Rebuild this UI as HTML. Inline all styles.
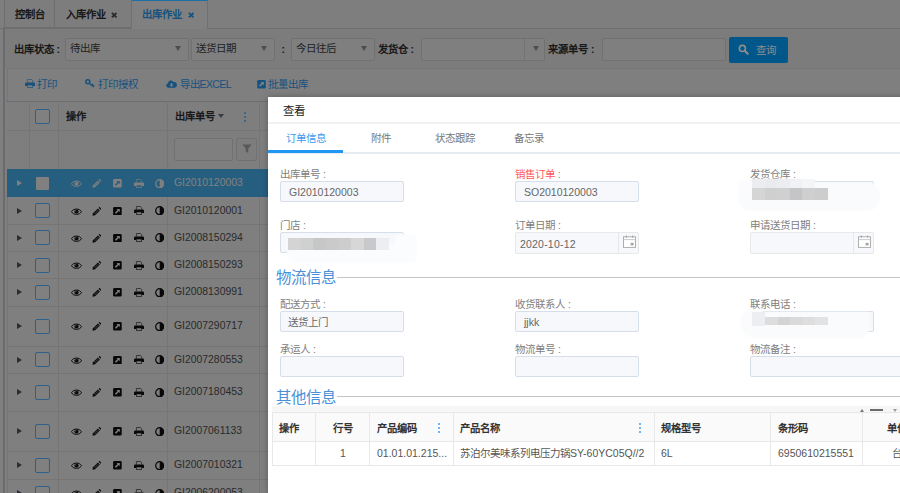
<!DOCTYPE html>
<html lang="zh-CN"><head><meta charset="utf-8">
<style>
*{box-sizing:border-box;margin:0;padding:0}
html,body{width:900px;height:493px;overflow:hidden;background:#fff;font-family:"Liberation Sans",sans-serif;font-size:10.5px;color:#333}
.abs{position:absolute}
#bg{position:absolute;left:0;top:0;width:900px;height:493px;background:#fff;overflow:hidden}
#dim{position:absolute;left:0;top:0;width:900px;height:493px;background:rgba(0,0,0,.5);z-index:1}
.tab{font-size:10.3px;position:absolute;top:0;height:28px;border:1px solid #ddd;border-top:none;background:#fafafa;line-height:30px;font-weight:bold;color:#333;padding-left:10px;white-space:nowrap}
.tab.act{z-index:2;background:#808080;border-color:#707070;color:#16527f;border-top:1.5px solid #1f6ea8;border-bottom:none;line-height:28px;height:29px}
.sel{position:absolute;height:23px;border:1px solid #e2e2e2;border-radius:2px;background:#fff;line-height:19.6px;padding-left:4px;color:#444;white-space:nowrap}
.sel i{position:absolute;right:6.5px;top:7px;border:3.4px solid transparent;border-top:5px solid #9a9a9a;border-bottom:none}
.lbl{font-size:10.3px;position:absolute;font-weight:bold;color:#333;line-height:14px;white-space:nowrap}
.tb{position:absolute;z-index:2;color:#16527f;white-space:nowrap;line-height:14px}
.hl{position:absolute;height:1px;background:#ebebeb}
.vl{position:absolute;width:1px;background:#ebebeb}
.cb{position:absolute;z-index:2;left:35.2px;width:15px;height:15px;border:1px solid #2c618c;border-radius:2px;background:#808080}
.num{position:absolute;left:174px;color:#555;white-space:nowrap;line-height:14px;font-size:10.4px}
.arr{position:absolute;left:17px;border:3.4px solid transparent;border-left:5.2px solid #555a66;border-right:none}
#modal{box-shadow:0 0 6px rgba(0,0,0,.28);z-index:3;position:absolute;left:268px;top:97px;width:640px;height:400px;background:#fff}
.fl{position:absolute;color:#808080;white-space:nowrap;line-height:14px}
.fi{position:absolute;width:124px;height:21px;border:1px solid #d5deea;border-radius:2px;background:#f6f8fb;line-height:20.5px;padding-left:8px;color:#666;white-space:nowrap}
.fd{border-color:#e8e8e8;padding-left:4px;line-height:22px;letter-spacing:0.2px;height:22px}
.fd b{position:absolute;right:19px;top:0;width:1px;height:20px;background:#e8e8e8}
.sec{position:absolute;left:8px;color:#4a90d9;font-size:15.4px;line-height:20px;white-space:nowrap;background:#fff;padding-right:1px}
.gh{font-size:10.3px;position:absolute;font-weight:bold;color:#333;white-space:nowrap;line-height:14px}
.gd{position:absolute;color:#555;white-space:nowrap;line-height:14px}
.mz{position:absolute;}
.dots{z-index:2;position:absolute;width:2px;height:2px;border-radius:1px;background:#4a9be0;box-shadow:0 4px 0 #4a9be0,0 8px 0 #4a9be0}
</style></head><body>
<div id="bg">
  <div class="abs" style="left:0;top:0;width:900px;height:28px;background:#fdfdfd"></div>
  <div class="abs" style="left:4px;top:28px;width:896px;height:40px;background:#f8f8f8"></div><div class="hl" style="left:0;top:27.5px;width:900px;background:#ddd"></div>
  <div class="tab" style="left:3.5px;width:51.5px">控制台</div>
  <div class="tab" style="left:54px;width:77.5px;padding-left:11px">入库作业<svg style="margin-left:5px;vertical-align:-0.5px" width="6.4" height="6.4" viewBox="0 0 7 7"><path d="M1 1 L6 6 M6 1 L1 6" stroke="#555" stroke-width="2" fill="none"/></svg></div>
  <div class="tab act" style="left:131px;width:77px;padding-left:9.5px">出库作业<svg style="margin-left:6.5px;vertical-align:-0.5px" width="6.4" height="6.4" viewBox="0 0 7 7"><path d="M1 1 L6 6 M6 1 L1 6" stroke="#16527f" stroke-width="2" fill="none"/></svg></div>
  <div class="vl" style="left:3px;top:28px;height:470px;width:1.5px;background:#d2d6de"></div>
  <div class="lbl" style="left:13.5px;top:43px">出库状态<span style="margin-left:3px">:</span></div>
  <div class="sel" style="left:64.5px;top:38px;width:124px">待出库<i></i></div>
  <div class="sel" style="left:190.5px;top:38px;width:84px">送货日期<i></i></div>
  <div class="lbl" style="left:281px;top:43px"><span style="margin-left:0.5px">:</span></div>
  <div class="sel" style="left:290.5px;top:38px;width:84px">今日往后<i></i></div>
  <div class="lbl" style="left:377.5px;top:43px">发货仓<span style="margin-left:3px">:</span></div>
  <div class="sel" style="left:421px;top:38px;width:124px"><i style="right:5.5px"></i><b style="position:absolute;right:19px;top:0;width:1px;height:21px;background:#e4e4e4"></b></div>
  <div class="lbl" style="left:548px;top:43px">来源单号<span style="margin-left:3px">:</span></div>
  <div class="sel" style="left:602px;top:38px;width:124px"></div>
  <div class="abs" style="left:729px;top:36.5px;width:59px;height:26px;z-index:2;background:#02578a;border-radius:2px;color:#8e8e8e;line-height:26px;padding-left:27px">查询</div>
  <svg class="abs" style="z-index:2;left:738px;top:44px" width="11" height="11" viewBox="0 0 12 12"><circle cx="4.8" cy="4.8" r="3.3" fill="none" stroke="#8e8e8e" stroke-width="1.7"/><path d="M7.4 7.4 L10.6 10.6" stroke="#8e8e8e" stroke-width="2.2" stroke-linecap="round"/></svg>
  <div class="hl" style="left:6px;top:67.5px;width:894px"></div>
  <div class="vl" style="left:6.5px;top:68px;height:430px"></div>
  <!-- toolbar icons -->
  <svg class="abs" style="z-index:2;left:24.5px;top:79px" width="10" height="9" viewBox="0 0 10 9"><path d="M2.4 3.6 V0.5 H6.6 L7.6 1.5 V3.6" fill="none" stroke="#16527f" stroke-width="0.8" opacity="0.8"/><path d="M0 4.5 Q0 3.4 1.1 3.4 H8.9 Q10 3.4 10 4.5 V7.1 H7.9 V6 H2.1 V7.1 H0 Z" fill="#16527f"/><rect x="2.4" y="6" width="5.2" height="2.5" fill="none" stroke="#16527f" stroke-width="0.8" opacity="0.85"/></svg>
  <div class="tb" style="left:37px;top:76.5px">打印</div>
  <svg class="abs" style="z-index:2;left:84.5px;top:79px" width="10" height="9" viewBox="0 0 10 9"><circle cx="2.8" cy="2.8" r="2" fill="none" stroke="#16527f" stroke-width="1.5"/><path d="M4.3 4.2 L8.6 8 M6.6 6.2 L8 4.9 M8 7.4 L9.3 6.2" stroke="#16527f" stroke-width="1.4" fill="none"/></svg>
  <div class="tb" style="left:98px;top:76.5px">打印授权</div>
  <svg class="abs" style="z-index:2;left:165.5px;top:80px" width="11" height="8" viewBox="0 0 11 8"><path d="M2.6 7.8 A2.3 2.3 0 0 1 1.9 3.3 A3 3 0 0 1 7.6 2.2 A2.8 2.8 0 0 1 8.6 7.8 Z" fill="#16527f"/><path d="M4.8 3 H6.2 V4.8 H7.4 L5.5 6.9 L3.6 4.8 H4.8 Z" fill="#808080"/></svg>
  <div class="tb" style="left:179.5px;top:76.5px">导出<span style="letter-spacing:-0.6px">EXCEL</span></div>
  <svg class="abs" style="z-index:2;left:256.5px;top:80px" width="9" height="8.5" viewBox="0 0 9 9"><rect x="0" y="0" width="9" height="9" rx="1.3" fill="#16527f"/><path d="M3.4 2 H7 V5.6 L5.8 4.4 L3 7.2 L1.8 6 L4.6 3.2 Z" fill="#808080"/></svg>
  <div class="tb" style="left:268px;top:76.5px">批量出库</div>
  
  <!-- grid header -->
  <div class="abs" style="left:7px;top:101px;width:893px;height:68px;background:#fdfdfd"></div>
  <div class="hl" style="left:7px;top:130px;width:893px"></div><div class="hl" style="left:6px;top:101px;width:894px;background:#d4dce6"></div>
  <div class="vl" style="left:29px;top:101px;height:68px"></div>
  <div class="vl" style="left:58px;top:101px;height:400px"></div>
  <div class="vl" style="left:167px;top:101px;height:400px"></div>
  <div class="vl" style="left:259px;top:101px;height:400px"></div>
  <div class="cb" style="top:109px"></div>
  <div class="lbl" style="left:66px;top:109.5px">操作</div>
  <div class="lbl" style="left:174.5px;top:109.5px">出库单号</div>
  <i class="abs" style="left:218px;top:114px;border:3px solid transparent;border-top:4.5px solid #777;border-bottom:none"></i>
  <div class="dots" style="left:244px;top:111.5px;background:#2c618c;box-shadow:0 4px 0 #2c618c,0 8px 0 #2c618c"></div>
  <div class="sel" style="left:174px;top:138px;width:59px"></div>
  <div class="sel" style="left:235.5px;top:138px;width:21px;background:#fafafa"><svg class="abs" style="left:5px;top:5px" width="10" height="10" viewBox="0 0 10 10"><path d="M0.3 0.5 H9.7 L6.2 4.6 V9 L3.8 7.6 V4.6 Z" fill="#b0b0b0"/></svg></div>
  <div class="abs" style="left:7px;top:169px;width:893px;height:28px;background:#4cbcff"></div><div class="arr" style="top:180.1px;border-left-color:#fff"></div><div class="cb" style="top:175.5px;background:#808080;border-color:#265e80"></div><svg class="abs" style="left:70.5px;top:180.0px" width="11" height="7.4" viewBox="0 0 11 7.4"><path d="M0.5 3.7 C2.2 0.2 8.8 0.2 10.5 3.7 C8.8 7.2 2.2 7.2 0.5 3.7 Z" fill="none" stroke="#fff" stroke-width="1"/><circle cx="5.5" cy="3.5" r="2.1" fill="#fff"/><circle cx="4.7" cy="2.7" r="0.7" fill="#4cbcff" opacity="0.6"/></svg><svg class="abs" style="left:92px;top:179.10000000000002px" width="9.4" height="9.2" viewBox="0 0 10 10"><path d="M0.4 9.6 L1 6.8 L6.3 1.5 L8.5 3.7 L3.2 9 Z" fill="#fff"/><path d="M7.1 0.8 L7.8 0.1 Q8.1 -0.1 8.5 0.2 L9.8 1.5 Q10.1 1.9 9.9 2.2 L9.2 2.9 Z" fill="#fff"/><path d="M2 7 L6.4 2.6 L7.4 3.6 L3 8 Z" fill="#4cbcff" opacity="0.35"/></svg><svg class="abs" style="left:113.4px;top:179.0px" width="8.8" height="8.6" viewBox="0 0 9 9"><rect x="0" y="0" width="9" height="9" rx="1.3" fill="#fff"/><path d="M3.6 2 H7 V5.4 L5.9 4.3 L3.1 7.1 L1.9 5.9 L4.7 3.1 Z" fill="#4cbcff"/></svg><svg class="abs" style="left:133.6px;top:178.70000000000002px" width="10" height="9" viewBox="0 0 10 9"><path d="M2.4 3.6 V0.5 H6.6 L7.6 1.5 V3.6" fill="none" stroke="#fff" stroke-width="0.8" opacity="0.75"/><path d="M0 4.5 Q0 3.4 1.1 3.4 H8.9 Q10 3.4 10 4.5 V7.1 H7.9 V6 H2.1 V7.1 H0 Z" fill="#fff"/><rect x="2.4" y="6" width="5.2" height="2.5" fill="none" stroke="#fff" stroke-width="0.8" opacity="0.8"/></svg><svg class="abs" style="left:154.8px;top:178.60000000000002px" width="9.4" height="9.4" viewBox="0 0 9 9"><circle cx="4.5" cy="4.5" r="3.8" fill="none" stroke="#fff" stroke-width="1.2"/><path d="M4.5 0.7 A3.8 3.8 0 0 1 4.5 8.3 Z" fill="#fff"/></svg><div class="num" style="top:176.0px;color:#fff">GI2010120003</div><div class="hl" style="left:7px;top:223.5px;width:893px"></div><div class="arr" style="top:207.6px"></div><div class="cb" style="top:203.0px"></div><svg class="abs" style="left:70.5px;top:207.5px" width="11" height="7.4" viewBox="0 0 11 7.4"><path d="M0.5 3.7 C2.2 0.2 8.8 0.2 10.5 3.7 C8.8 7.2 2.2 7.2 0.5 3.7 Z" fill="none" stroke="#111" stroke-width="1"/><circle cx="5.5" cy="3.5" r="2.1" fill="#111"/><circle cx="4.7" cy="2.7" r="0.7" fill="#fff" opacity="0.6"/></svg><svg class="abs" style="left:92px;top:206.60000000000002px" width="9.4" height="9.2" viewBox="0 0 10 10"><path d="M0.4 9.6 L1 6.8 L6.3 1.5 L8.5 3.7 L3.2 9 Z" fill="#111"/><path d="M7.1 0.8 L7.8 0.1 Q8.1 -0.1 8.5 0.2 L9.8 1.5 Q10.1 1.9 9.9 2.2 L9.2 2.9 Z" fill="#111"/><path d="M2 7 L6.4 2.6 L7.4 3.6 L3 8 Z" fill="#fff" opacity="0.35"/></svg><svg class="abs" style="left:113.4px;top:206.5px" width="8.8" height="8.6" viewBox="0 0 9 9"><rect x="0" y="0" width="9" height="9" rx="1.3" fill="#111"/><path d="M3.6 2 H7 V5.4 L5.9 4.3 L3.1 7.1 L1.9 5.9 L4.7 3.1 Z" fill="#fff"/></svg><svg class="abs" style="left:133.6px;top:206.20000000000002px" width="10" height="9" viewBox="0 0 10 9"><path d="M2.4 3.6 V0.5 H6.6 L7.6 1.5 V3.6" fill="none" stroke="#111" stroke-width="0.8" opacity="0.75"/><path d="M0 4.5 Q0 3.4 1.1 3.4 H8.9 Q10 3.4 10 4.5 V7.1 H7.9 V6 H2.1 V7.1 H0 Z" fill="#111"/><rect x="2.4" y="6" width="5.2" height="2.5" fill="none" stroke="#111" stroke-width="0.8" opacity="0.8"/></svg><svg class="abs" style="left:154.8px;top:206.10000000000002px" width="9.4" height="9.4" viewBox="0 0 9 9"><circle cx="4.5" cy="4.5" r="3.8" fill="none" stroke="#111" stroke-width="1.2"/><path d="M4.5 0.7 A3.8 3.8 0 0 1 4.5 8.3 Z" fill="#111"/></svg><div class="num" style="top:203.5px">GI2010120001</div><div class="hl" style="left:7px;top:251.0px;width:893px"></div><div class="arr" style="top:234.85px"></div><div class="cb" style="top:230.25px"></div><svg class="abs" style="left:70.5px;top:234.75px" width="11" height="7.4" viewBox="0 0 11 7.4"><path d="M0.5 3.7 C2.2 0.2 8.8 0.2 10.5 3.7 C8.8 7.2 2.2 7.2 0.5 3.7 Z" fill="none" stroke="#111" stroke-width="1"/><circle cx="5.5" cy="3.5" r="2.1" fill="#111"/><circle cx="4.7" cy="2.7" r="0.7" fill="#fff" opacity="0.6"/></svg><svg class="abs" style="left:92px;top:233.85000000000002px" width="9.4" height="9.2" viewBox="0 0 10 10"><path d="M0.4 9.6 L1 6.8 L6.3 1.5 L8.5 3.7 L3.2 9 Z" fill="#111"/><path d="M7.1 0.8 L7.8 0.1 Q8.1 -0.1 8.5 0.2 L9.8 1.5 Q10.1 1.9 9.9 2.2 L9.2 2.9 Z" fill="#111"/><path d="M2 7 L6.4 2.6 L7.4 3.6 L3 8 Z" fill="#fff" opacity="0.35"/></svg><svg class="abs" style="left:113.4px;top:233.75px" width="8.8" height="8.6" viewBox="0 0 9 9"><rect x="0" y="0" width="9" height="9" rx="1.3" fill="#111"/><path d="M3.6 2 H7 V5.4 L5.9 4.3 L3.1 7.1 L1.9 5.9 L4.7 3.1 Z" fill="#fff"/></svg><svg class="abs" style="left:133.6px;top:233.45000000000002px" width="10" height="9" viewBox="0 0 10 9"><path d="M2.4 3.6 V0.5 H6.6 L7.6 1.5 V3.6" fill="none" stroke="#111" stroke-width="0.8" opacity="0.75"/><path d="M0 4.5 Q0 3.4 1.1 3.4 H8.9 Q10 3.4 10 4.5 V7.1 H7.9 V6 H2.1 V7.1 H0 Z" fill="#111"/><rect x="2.4" y="6" width="5.2" height="2.5" fill="none" stroke="#111" stroke-width="0.8" opacity="0.8"/></svg><svg class="abs" style="left:154.8px;top:233.35000000000002px" width="9.4" height="9.4" viewBox="0 0 9 9"><circle cx="4.5" cy="4.5" r="3.8" fill="none" stroke="#111" stroke-width="1.2"/><path d="M4.5 0.7 A3.8 3.8 0 0 1 4.5 8.3 Z" fill="#111"/></svg><div class="num" style="top:230.75px">GI2008150294</div><div class="hl" style="left:7px;top:278.0px;width:893px"></div><div class="arr" style="top:262.1px"></div><div class="cb" style="top:257.5px"></div><svg class="abs" style="left:70.5px;top:262.0px" width="11" height="7.4" viewBox="0 0 11 7.4"><path d="M0.5 3.7 C2.2 0.2 8.8 0.2 10.5 3.7 C8.8 7.2 2.2 7.2 0.5 3.7 Z" fill="none" stroke="#111" stroke-width="1"/><circle cx="5.5" cy="3.5" r="2.1" fill="#111"/><circle cx="4.7" cy="2.7" r="0.7" fill="#fff" opacity="0.6"/></svg><svg class="abs" style="left:92px;top:261.1px" width="9.4" height="9.2" viewBox="0 0 10 10"><path d="M0.4 9.6 L1 6.8 L6.3 1.5 L8.5 3.7 L3.2 9 Z" fill="#111"/><path d="M7.1 0.8 L7.8 0.1 Q8.1 -0.1 8.5 0.2 L9.8 1.5 Q10.1 1.9 9.9 2.2 L9.2 2.9 Z" fill="#111"/><path d="M2 7 L6.4 2.6 L7.4 3.6 L3 8 Z" fill="#fff" opacity="0.35"/></svg><svg class="abs" style="left:113.4px;top:261.0px" width="8.8" height="8.6" viewBox="0 0 9 9"><rect x="0" y="0" width="9" height="9" rx="1.3" fill="#111"/><path d="M3.6 2 H7 V5.4 L5.9 4.3 L3.1 7.1 L1.9 5.9 L4.7 3.1 Z" fill="#fff"/></svg><svg class="abs" style="left:133.6px;top:260.7px" width="10" height="9" viewBox="0 0 10 9"><path d="M2.4 3.6 V0.5 H6.6 L7.6 1.5 V3.6" fill="none" stroke="#111" stroke-width="0.8" opacity="0.75"/><path d="M0 4.5 Q0 3.4 1.1 3.4 H8.9 Q10 3.4 10 4.5 V7.1 H7.9 V6 H2.1 V7.1 H0 Z" fill="#111"/><rect x="2.4" y="6" width="5.2" height="2.5" fill="none" stroke="#111" stroke-width="0.8" opacity="0.8"/></svg><svg class="abs" style="left:154.8px;top:260.6px" width="9.4" height="9.4" viewBox="0 0 9 9"><circle cx="4.5" cy="4.5" r="3.8" fill="none" stroke="#111" stroke-width="1.2"/><path d="M4.5 0.7 A3.8 3.8 0 0 1 4.5 8.3 Z" fill="#111"/></svg><div class="num" style="top:258.0px">GI2008150293</div><div class="hl" style="left:7px;top:305.5px;width:893px"></div><div class="arr" style="top:289.35px"></div><div class="cb" style="top:284.75px"></div><svg class="abs" style="left:70.5px;top:289.25px" width="11" height="7.4" viewBox="0 0 11 7.4"><path d="M0.5 3.7 C2.2 0.2 8.8 0.2 10.5 3.7 C8.8 7.2 2.2 7.2 0.5 3.7 Z" fill="none" stroke="#111" stroke-width="1"/><circle cx="5.5" cy="3.5" r="2.1" fill="#111"/><circle cx="4.7" cy="2.7" r="0.7" fill="#fff" opacity="0.6"/></svg><svg class="abs" style="left:92px;top:288.35px" width="9.4" height="9.2" viewBox="0 0 10 10"><path d="M0.4 9.6 L1 6.8 L6.3 1.5 L8.5 3.7 L3.2 9 Z" fill="#111"/><path d="M7.1 0.8 L7.8 0.1 Q8.1 -0.1 8.5 0.2 L9.8 1.5 Q10.1 1.9 9.9 2.2 L9.2 2.9 Z" fill="#111"/><path d="M2 7 L6.4 2.6 L7.4 3.6 L3 8 Z" fill="#fff" opacity="0.35"/></svg><svg class="abs" style="left:113.4px;top:288.25px" width="8.8" height="8.6" viewBox="0 0 9 9"><rect x="0" y="0" width="9" height="9" rx="1.3" fill="#111"/><path d="M3.6 2 H7 V5.4 L5.9 4.3 L3.1 7.1 L1.9 5.9 L4.7 3.1 Z" fill="#fff"/></svg><svg class="abs" style="left:133.6px;top:287.95px" width="10" height="9" viewBox="0 0 10 9"><path d="M2.4 3.6 V0.5 H6.6 L7.6 1.5 V3.6" fill="none" stroke="#111" stroke-width="0.8" opacity="0.75"/><path d="M0 4.5 Q0 3.4 1.1 3.4 H8.9 Q10 3.4 10 4.5 V7.1 H7.9 V6 H2.1 V7.1 H0 Z" fill="#111"/><rect x="2.4" y="6" width="5.2" height="2.5" fill="none" stroke="#111" stroke-width="0.8" opacity="0.8"/></svg><svg class="abs" style="left:154.8px;top:287.85px" width="9.4" height="9.4" viewBox="0 0 9 9"><circle cx="4.5" cy="4.5" r="3.8" fill="none" stroke="#111" stroke-width="1.2"/><path d="M4.5 0.7 A3.8 3.8 0 0 1 4.5 8.3 Z" fill="#111"/></svg><div class="num" style="top:285.25px">GI2008130991</div><div class="hl" style="left:7px;top:345.5px;width:893px"></div><div class="arr" style="top:323.1px"></div><div class="cb" style="top:318.5px"></div><svg class="abs" style="left:70.5px;top:323.0px" width="11" height="7.4" viewBox="0 0 11 7.4"><path d="M0.5 3.7 C2.2 0.2 8.8 0.2 10.5 3.7 C8.8 7.2 2.2 7.2 0.5 3.7 Z" fill="none" stroke="#111" stroke-width="1"/><circle cx="5.5" cy="3.5" r="2.1" fill="#111"/><circle cx="4.7" cy="2.7" r="0.7" fill="#fff" opacity="0.6"/></svg><svg class="abs" style="left:92px;top:322.1px" width="9.4" height="9.2" viewBox="0 0 10 10"><path d="M0.4 9.6 L1 6.8 L6.3 1.5 L8.5 3.7 L3.2 9 Z" fill="#111"/><path d="M7.1 0.8 L7.8 0.1 Q8.1 -0.1 8.5 0.2 L9.8 1.5 Q10.1 1.9 9.9 2.2 L9.2 2.9 Z" fill="#111"/><path d="M2 7 L6.4 2.6 L7.4 3.6 L3 8 Z" fill="#fff" opacity="0.35"/></svg><svg class="abs" style="left:113.4px;top:322.0px" width="8.8" height="8.6" viewBox="0 0 9 9"><rect x="0" y="0" width="9" height="9" rx="1.3" fill="#111"/><path d="M3.6 2 H7 V5.4 L5.9 4.3 L3.1 7.1 L1.9 5.9 L4.7 3.1 Z" fill="#fff"/></svg><svg class="abs" style="left:133.6px;top:321.7px" width="10" height="9" viewBox="0 0 10 9"><path d="M2.4 3.6 V0.5 H6.6 L7.6 1.5 V3.6" fill="none" stroke="#111" stroke-width="0.8" opacity="0.75"/><path d="M0 4.5 Q0 3.4 1.1 3.4 H8.9 Q10 3.4 10 4.5 V7.1 H7.9 V6 H2.1 V7.1 H0 Z" fill="#111"/><rect x="2.4" y="6" width="5.2" height="2.5" fill="none" stroke="#111" stroke-width="0.8" opacity="0.8"/></svg><svg class="abs" style="left:154.8px;top:321.6px" width="9.4" height="9.4" viewBox="0 0 9 9"><circle cx="4.5" cy="4.5" r="3.8" fill="none" stroke="#111" stroke-width="1.2"/><path d="M4.5 0.7 A3.8 3.8 0 0 1 4.5 8.3 Z" fill="#111"/></svg><div class="num" style="top:319.0px">GI2007290717</div><div class="hl" style="left:7px;top:372.5px;width:893px"></div><div class="arr" style="top:356.6px"></div><div class="cb" style="top:352.0px"></div><svg class="abs" style="left:70.5px;top:356.5px" width="11" height="7.4" viewBox="0 0 11 7.4"><path d="M0.5 3.7 C2.2 0.2 8.8 0.2 10.5 3.7 C8.8 7.2 2.2 7.2 0.5 3.7 Z" fill="none" stroke="#111" stroke-width="1"/><circle cx="5.5" cy="3.5" r="2.1" fill="#111"/><circle cx="4.7" cy="2.7" r="0.7" fill="#fff" opacity="0.6"/></svg><svg class="abs" style="left:92px;top:355.6px" width="9.4" height="9.2" viewBox="0 0 10 10"><path d="M0.4 9.6 L1 6.8 L6.3 1.5 L8.5 3.7 L3.2 9 Z" fill="#111"/><path d="M7.1 0.8 L7.8 0.1 Q8.1 -0.1 8.5 0.2 L9.8 1.5 Q10.1 1.9 9.9 2.2 L9.2 2.9 Z" fill="#111"/><path d="M2 7 L6.4 2.6 L7.4 3.6 L3 8 Z" fill="#fff" opacity="0.35"/></svg><svg class="abs" style="left:113.4px;top:355.5px" width="8.8" height="8.6" viewBox="0 0 9 9"><rect x="0" y="0" width="9" height="9" rx="1.3" fill="#111"/><path d="M3.6 2 H7 V5.4 L5.9 4.3 L3.1 7.1 L1.9 5.9 L4.7 3.1 Z" fill="#fff"/></svg><svg class="abs" style="left:133.6px;top:355.2px" width="10" height="9" viewBox="0 0 10 9"><path d="M2.4 3.6 V0.5 H6.6 L7.6 1.5 V3.6" fill="none" stroke="#111" stroke-width="0.8" opacity="0.75"/><path d="M0 4.5 Q0 3.4 1.1 3.4 H8.9 Q10 3.4 10 4.5 V7.1 H7.9 V6 H2.1 V7.1 H0 Z" fill="#111"/><rect x="2.4" y="6" width="5.2" height="2.5" fill="none" stroke="#111" stroke-width="0.8" opacity="0.8"/></svg><svg class="abs" style="left:154.8px;top:355.1px" width="9.4" height="9.4" viewBox="0 0 9 9"><circle cx="4.5" cy="4.5" r="3.8" fill="none" stroke="#111" stroke-width="1.2"/><path d="M4.5 0.7 A3.8 3.8 0 0 1 4.5 8.3 Z" fill="#111"/></svg><div class="num" style="top:352.5px">GI2007280553</div><div class="hl" style="left:7px;top:411.0px;width:893px"></div><div class="arr" style="top:389.35px"></div><div class="cb" style="top:384.75px"></div><svg class="abs" style="left:70.5px;top:389.25px" width="11" height="7.4" viewBox="0 0 11 7.4"><path d="M0.5 3.7 C2.2 0.2 8.8 0.2 10.5 3.7 C8.8 7.2 2.2 7.2 0.5 3.7 Z" fill="none" stroke="#111" stroke-width="1"/><circle cx="5.5" cy="3.5" r="2.1" fill="#111"/><circle cx="4.7" cy="2.7" r="0.7" fill="#fff" opacity="0.6"/></svg><svg class="abs" style="left:92px;top:388.35px" width="9.4" height="9.2" viewBox="0 0 10 10"><path d="M0.4 9.6 L1 6.8 L6.3 1.5 L8.5 3.7 L3.2 9 Z" fill="#111"/><path d="M7.1 0.8 L7.8 0.1 Q8.1 -0.1 8.5 0.2 L9.8 1.5 Q10.1 1.9 9.9 2.2 L9.2 2.9 Z" fill="#111"/><path d="M2 7 L6.4 2.6 L7.4 3.6 L3 8 Z" fill="#fff" opacity="0.35"/></svg><svg class="abs" style="left:113.4px;top:388.25px" width="8.8" height="8.6" viewBox="0 0 9 9"><rect x="0" y="0" width="9" height="9" rx="1.3" fill="#111"/><path d="M3.6 2 H7 V5.4 L5.9 4.3 L3.1 7.1 L1.9 5.9 L4.7 3.1 Z" fill="#fff"/></svg><svg class="abs" style="left:133.6px;top:387.95px" width="10" height="9" viewBox="0 0 10 9"><path d="M2.4 3.6 V0.5 H6.6 L7.6 1.5 V3.6" fill="none" stroke="#111" stroke-width="0.8" opacity="0.75"/><path d="M0 4.5 Q0 3.4 1.1 3.4 H8.9 Q10 3.4 10 4.5 V7.1 H7.9 V6 H2.1 V7.1 H0 Z" fill="#111"/><rect x="2.4" y="6" width="5.2" height="2.5" fill="none" stroke="#111" stroke-width="0.8" opacity="0.8"/></svg><svg class="abs" style="left:154.8px;top:387.85px" width="9.4" height="9.4" viewBox="0 0 9 9"><circle cx="4.5" cy="4.5" r="3.8" fill="none" stroke="#111" stroke-width="1.2"/><path d="M4.5 0.7 A3.8 3.8 0 0 1 4.5 8.3 Z" fill="#111"/></svg><div class="num" style="top:385.25px">GI2007180453</div><div class="hl" style="left:7px;top:450.5px;width:893px"></div><div class="arr" style="top:428.35px"></div><div class="cb" style="top:423.75px"></div><svg class="abs" style="left:70.5px;top:428.25px" width="11" height="7.4" viewBox="0 0 11 7.4"><path d="M0.5 3.7 C2.2 0.2 8.8 0.2 10.5 3.7 C8.8 7.2 2.2 7.2 0.5 3.7 Z" fill="none" stroke="#111" stroke-width="1"/><circle cx="5.5" cy="3.5" r="2.1" fill="#111"/><circle cx="4.7" cy="2.7" r="0.7" fill="#fff" opacity="0.6"/></svg><svg class="abs" style="left:92px;top:427.35px" width="9.4" height="9.2" viewBox="0 0 10 10"><path d="M0.4 9.6 L1 6.8 L6.3 1.5 L8.5 3.7 L3.2 9 Z" fill="#111"/><path d="M7.1 0.8 L7.8 0.1 Q8.1 -0.1 8.5 0.2 L9.8 1.5 Q10.1 1.9 9.9 2.2 L9.2 2.9 Z" fill="#111"/><path d="M2 7 L6.4 2.6 L7.4 3.6 L3 8 Z" fill="#fff" opacity="0.35"/></svg><svg class="abs" style="left:113.4px;top:427.25px" width="8.8" height="8.6" viewBox="0 0 9 9"><rect x="0" y="0" width="9" height="9" rx="1.3" fill="#111"/><path d="M3.6 2 H7 V5.4 L5.9 4.3 L3.1 7.1 L1.9 5.9 L4.7 3.1 Z" fill="#fff"/></svg><svg class="abs" style="left:133.6px;top:426.95px" width="10" height="9" viewBox="0 0 10 9"><path d="M2.4 3.6 V0.5 H6.6 L7.6 1.5 V3.6" fill="none" stroke="#111" stroke-width="0.8" opacity="0.75"/><path d="M0 4.5 Q0 3.4 1.1 3.4 H8.9 Q10 3.4 10 4.5 V7.1 H7.9 V6 H2.1 V7.1 H0 Z" fill="#111"/><rect x="2.4" y="6" width="5.2" height="2.5" fill="none" stroke="#111" stroke-width="0.8" opacity="0.8"/></svg><svg class="abs" style="left:154.8px;top:426.85px" width="9.4" height="9.4" viewBox="0 0 9 9"><circle cx="4.5" cy="4.5" r="3.8" fill="none" stroke="#111" stroke-width="1.2"/><path d="M4.5 0.7 A3.8 3.8 0 0 1 4.5 8.3 Z" fill="#111"/></svg><div class="num" style="top:424.25px">GI2007061133</div><div class="hl" style="left:7px;top:478.5px;width:893px"></div><div class="arr" style="top:462.1px"></div><div class="cb" style="top:457.5px"></div><svg class="abs" style="left:70.5px;top:462.0px" width="11" height="7.4" viewBox="0 0 11 7.4"><path d="M0.5 3.7 C2.2 0.2 8.8 0.2 10.5 3.7 C8.8 7.2 2.2 7.2 0.5 3.7 Z" fill="none" stroke="#111" stroke-width="1"/><circle cx="5.5" cy="3.5" r="2.1" fill="#111"/><circle cx="4.7" cy="2.7" r="0.7" fill="#fff" opacity="0.6"/></svg><svg class="abs" style="left:92px;top:461.1px" width="9.4" height="9.2" viewBox="0 0 10 10"><path d="M0.4 9.6 L1 6.8 L6.3 1.5 L8.5 3.7 L3.2 9 Z" fill="#111"/><path d="M7.1 0.8 L7.8 0.1 Q8.1 -0.1 8.5 0.2 L9.8 1.5 Q10.1 1.9 9.9 2.2 L9.2 2.9 Z" fill="#111"/><path d="M2 7 L6.4 2.6 L7.4 3.6 L3 8 Z" fill="#fff" opacity="0.35"/></svg><svg class="abs" style="left:113.4px;top:461.0px" width="8.8" height="8.6" viewBox="0 0 9 9"><rect x="0" y="0" width="9" height="9" rx="1.3" fill="#111"/><path d="M3.6 2 H7 V5.4 L5.9 4.3 L3.1 7.1 L1.9 5.9 L4.7 3.1 Z" fill="#fff"/></svg><svg class="abs" style="left:133.6px;top:460.7px" width="10" height="9" viewBox="0 0 10 9"><path d="M2.4 3.6 V0.5 H6.6 L7.6 1.5 V3.6" fill="none" stroke="#111" stroke-width="0.8" opacity="0.75"/><path d="M0 4.5 Q0 3.4 1.1 3.4 H8.9 Q10 3.4 10 4.5 V7.1 H7.9 V6 H2.1 V7.1 H0 Z" fill="#111"/><rect x="2.4" y="6" width="5.2" height="2.5" fill="none" stroke="#111" stroke-width="0.8" opacity="0.8"/></svg><svg class="abs" style="left:154.8px;top:460.6px" width="9.4" height="9.4" viewBox="0 0 9 9"><circle cx="4.5" cy="4.5" r="3.8" fill="none" stroke="#111" stroke-width="1.2"/><path d="M4.5 0.7 A3.8 3.8 0 0 1 4.5 8.3 Z" fill="#111"/></svg><div class="num" style="top:458.0px">GI2007010321</div><div class="hl" style="left:7px;top:506.5px;width:893px"></div><div class="arr" style="top:490.1px"></div><div class="cb" style="top:485.5px"></div><svg class="abs" style="left:70.5px;top:490.0px" width="11" height="7.4" viewBox="0 0 11 7.4"><path d="M0.5 3.7 C2.2 0.2 8.8 0.2 10.5 3.7 C8.8 7.2 2.2 7.2 0.5 3.7 Z" fill="none" stroke="#111" stroke-width="1"/><circle cx="5.5" cy="3.5" r="2.1" fill="#111"/><circle cx="4.7" cy="2.7" r="0.7" fill="#fff" opacity="0.6"/></svg><svg class="abs" style="left:92px;top:489.1px" width="9.4" height="9.2" viewBox="0 0 10 10"><path d="M0.4 9.6 L1 6.8 L6.3 1.5 L8.5 3.7 L3.2 9 Z" fill="#111"/><path d="M7.1 0.8 L7.8 0.1 Q8.1 -0.1 8.5 0.2 L9.8 1.5 Q10.1 1.9 9.9 2.2 L9.2 2.9 Z" fill="#111"/><path d="M2 7 L6.4 2.6 L7.4 3.6 L3 8 Z" fill="#fff" opacity="0.35"/></svg><svg class="abs" style="left:113.4px;top:489.0px" width="8.8" height="8.6" viewBox="0 0 9 9"><rect x="0" y="0" width="9" height="9" rx="1.3" fill="#111"/><path d="M3.6 2 H7 V5.4 L5.9 4.3 L3.1 7.1 L1.9 5.9 L4.7 3.1 Z" fill="#fff"/></svg><svg class="abs" style="left:133.6px;top:488.7px" width="10" height="9" viewBox="0 0 10 9"><path d="M2.4 3.6 V0.5 H6.6 L7.6 1.5 V3.6" fill="none" stroke="#111" stroke-width="0.8" opacity="0.75"/><path d="M0 4.5 Q0 3.4 1.1 3.4 H8.9 Q10 3.4 10 4.5 V7.1 H7.9 V6 H2.1 V7.1 H0 Z" fill="#111"/><rect x="2.4" y="6" width="5.2" height="2.5" fill="none" stroke="#111" stroke-width="0.8" opacity="0.8"/></svg><svg class="abs" style="left:154.8px;top:488.6px" width="9.4" height="9.4" viewBox="0 0 9 9"><circle cx="4.5" cy="4.5" r="3.8" fill="none" stroke="#111" stroke-width="1.2"/><path d="M4.5 0.7 A3.8 3.8 0 0 1 4.5 8.3 Z" fill="#111"/></svg><div class="num" style="top:486.0px">GI2006200053</div>
</div>
<div id="dim"></div>
<div id="modal">
  <div class="abs" style="left:14.5px;top:6.5px;font-size:11.4px;color:#222;line-height:15px">查看</div>
  <div class="hl" style="left:0;top:25px;width:640px;height:2px;background:#f1f1f1"></div>
  <div class="abs" style="left:18px;top:34px;color:#3f9aee;line-height:14px">订单信息</div>
  <div class="abs" style="left:102.5px;top:34px;color:#777;line-height:14px">附件</div>
  <div class="abs" style="left:166.5px;top:34px;color:#777;line-height:14px">状态跟踪</div>
  <div class="abs" style="left:245.5px;top:34px;color:#777;line-height:14px">备忘录</div>
  <div class="hl" style="left:0;top:55px;width:640px;height:1.5px;background:#e6ebf2"></div>
  <div class="abs" style="left:0;top:53px;width:75px;height:3px;background:#2196f3"></div>

  <div class="fl" style="left:11.5px;top:70px">出库单号<span style="margin-left:3.4px">:</span></div>
  <div class="fi" style="left:12px;top:84px">GI2010120003</div>
  <div class="fl" style="left:246.5px;top:70px;color:#ff5a5a">销售订单<span style="margin-left:3.4px">:</span></div>
  <div class="fi" style="left:247px;top:84px">SO2010120003</div>
  <div class="fl" style="left:481.5px;top:70px">发货仓库<span style="margin-left:3.4px">:</span></div>
  <div class="fi" style="left:482px;top:84px"></div>

  <div class="fl" style="left:11.5px;top:121px">门店<span style="margin-left:3.4px">:</span></div>
  <div class="fi" style="left:12px;top:135px"></div>
  <div class="fl" style="left:246.5px;top:121px">订单日期<span style="margin-left:3.4px">:</span></div>
  <div class="fi fd" style="left:247px;top:135px">2020-10-12<b></b><svg style="position:absolute;right:2.5px;top:1.5px" width="13" height="13" viewBox="0 0 13 13"><rect x="0.5" y="1.8" width="12" height="10.6" fill="#fff" stroke="#a6a6a6" stroke-width="0.9"/><path d="M0.5 4.6 H12.5" stroke="#bdbdbd" stroke-width="0.8"/><path d="M3.3 0.3 V3 M9.7 0.3 V3" stroke="#a6a6a6" stroke-width="0.9"/><rect x="7.6" y="7.8" width="3" height="2.6" fill="#a6a6a6"/></svg></div>
  <div class="fl" style="left:481.5px;top:121px">申请送货日期<span style="margin-left:3.4px">:</span></div>
  <div class="fi fd" style="left:482px;top:135px"><b></b><svg style="position:absolute;right:2.5px;top:1.5px" width="13" height="13" viewBox="0 0 13 13"><rect x="0.5" y="1.8" width="12" height="10.6" fill="#fff" stroke="#a6a6a6" stroke-width="0.9"/><path d="M0.5 4.6 H12.5" stroke="#bdbdbd" stroke-width="0.8"/><path d="M3.3 0.3 V3 M9.7 0.3 V3" stroke="#a6a6a6" stroke-width="0.9"/><rect x="7.6" y="7.8" width="3" height="2.6" fill="#a6a6a6"/></svg></div>

  <div class="hl" style="left:8px;top:179.5px;width:640px;background:#c4c4c4"></div>
  <div class="sec" style="top:171px">物流信息</div>

  <div class="fl" style="left:11.5px;top:200px">配送方式<span style="margin-left:3.4px">:</span></div>
  <div class="fi" style="left:12px;top:214px;padding-left:7px">送货上门</div>
  <div class="fl" style="left:246.5px;top:200px">收货联系人<span style="margin-left:3.4px">:</span></div>
  <div class="fi" style="left:247px;top:214px">jjkk</div>
  <div class="fl" style="left:481.5px;top:200px">联系电话<span style="margin-left:3.4px">:</span></div>
  <div class="fi" style="left:482px;top:214px"></div>

  <div class="fl" style="left:11.5px;top:244.5px">承运人<span style="margin-left:3.4px">:</span></div>
  <div class="fi" style="left:12px;top:259px"></div>
  <div class="fl" style="left:246.5px;top:244.5px">物流单号<span style="margin-left:3.4px">:</span></div>
  <div class="fi" style="left:247px;top:259px"></div>
  <div class="fl" style="left:481.5px;top:244.5px">物流备注<span style="margin-left:3.4px">:</span></div>
  <div class="fi" style="left:482px;top:259px;width:200px"></div>

  <div class="hl" style="left:8px;top:299px;width:640px;background:#c4c4c4"></div>
  <div class="sec" style="top:291px">其他信息</div>

  <!-- grid -->
  <div class="abs" style="left:4px;top:309px;width:640px;height:6px;background:#f6f6f6"></div>
  <div class="abs" style="left:4px;top:315px;width:640px;height:29.5px;background:#fafafa;border-top:1px solid #e8e8e8;border-bottom:1px solid #e8e8e8"></div>
  <div class="hl" style="left:4px;top:368px;width:640px;background:#e8e8e8"></div>
  <div class="vl" style="left:4px;top:315px;height:54px;background:#e8e8e8"></div>
  <div class="vl" style="left:47px;top:315px;height:54px;background:#e8e8e8"></div>
  <div class="vl" style="left:101px;top:315px;height:54px;background:#e8e8e8"></div>
  <div class="vl" style="left:185px;top:315px;height:54px;background:#e8e8e8"></div>
  <div class="vl" style="left:385.5px;top:315px;height:54px;background:#e8e8e8"></div>
  <div class="vl" style="left:502px;top:315px;height:54px;background:#e8e8e8"></div>
  <div class="vl" style="left:594px;top:315px;height:54px;background:#e8e8e8"></div>
  <div class="gh" style="left:11px;top:325px">操作</div>
  <div class="gh" style="left:65px;top:325px">行号</div>
  <div class="gh" style="left:109px;top:325px">产品编码</div>
  <div class="dots" style="left:170px;top:325.5px"></div>
  <div class="gh" style="left:192px;top:325px">产品名称</div>
  <div class="dots" style="left:370.5px;top:325.5px"></div>
  <div class="gh" style="left:393px;top:325px">规格型号</div>
  <div class="gh" style="left:510px;top:325px">条形码</div>
  <div class="gh" style="left:618.5px;top:325px">单位</div>
  <div class="gd" style="left:72px;top:349px">1</div>
  <div class="gd" style="left:109px;top:349px">01.01.01.215...</div>
  <div class="gd" style="left:192px;top:349px">苏泊尔美味系列电压力锅SY-60YC05Q//2</div>
  <div class="gd" style="left:393px;top:349px">6L</div>
  <div class="gd" style="left:510px;top:349px">6950610215551</div>
  <div class="gd" style="left:623.5px;top:349px">台</div>
  <i class="abs" style="left:591.5px;top:311.5px;border:2px solid transparent;border-bottom:3px solid #777;border-top:none"></i>
  <div class="abs" style="left:602px;top:311.5px;width:13px;height:2px;background:#6a6a6a"></div>
  <i class="abs" style="left:625px;top:311.5px;border:2px solid transparent;border-top:3px solid #999;border-bottom:none"></i>
  <div class="abs" style="left:470px;top:85.5px;width:142px;height:28px;background:#fafbfc;border-radius:14px 10px 14px 14px;filter:blur(1.2px)"></div><div class="abs" style="left:470px;top:82px;width:68px;height:10px;background:#fbfbfd;border-radius:8px 0 0 0;filter:blur(1px)"></div><div class="abs" style="left:484.0px;top:82px;width:12.9px;height:9px;background:#ecedf1"></div><div class="abs" style="left:496.6px;top:82px;width:12.9px;height:9px;background:#eaebef"></div><div class="abs" style="left:509.20000000000005px;top:82px;width:12.9px;height:9px;background:#ecedf1"></div><div class="abs" style="left:521.8px;top:82px;width:12.9px;height:9px;background:#f0f1f4"></div><div class="abs" style="left:534.4px;top:82px;width:12.9px;height:9px;background:#f4f5f7"></div><div class="abs" style="left:484.0px;top:91px;width:12.870000000000001px;height:12px;background:#d5d5d5"></div><div class="abs" style="left:496.57000000000005px;top:91px;width:12.870000000000001px;height:12px;background:#cfcfd0"></div><div class="abs" style="left:509.14px;top:91px;width:12.870000000000001px;height:12px;background:#d0d0d1"></div><div class="abs" style="left:521.71px;top:91px;width:12.870000000000001px;height:12px;background:#c5c5c7"></div><div class="abs" style="left:534.28px;top:91px;width:12.870000000000001px;height:12px;background:#cfcfd0"></div><div class="abs" style="left:546.85px;top:91px;width:12.870000000000001px;height:12px;background:#cdcdce"></div><div class="abs" style="left:19px;top:148px;width:130px;height:18px;background:#fbfcfd;border-radius:10px;filter:blur(1.2px)"></div><div class="abs" style="left:127px;top:136.5px;width:22px;height:26px;background:#fbfcfd;border-radius:6px;filter:blur(1.2px)"></div><div class="abs" style="left:20.19999999999999px;top:140.7px;width:12.850000000000001px;height:12.3px;background:#d4d4d4"></div><div class="abs" style="left:32.75px;top:140.7px;width:12.850000000000001px;height:12.3px;background:#cfd0d0"></div><div class="abs" style="left:45.30000000000001px;top:140.7px;width:12.850000000000001px;height:12.3px;background:#c7c7c8"></div><div class="abs" style="left:57.85000000000002px;top:140.7px;width:12.850000000000001px;height:12.3px;background:#cacaca"></div><div class="abs" style="left:70.39999999999998px;top:140.7px;width:12.850000000000001px;height:12.3px;background:#cdcdcd"></div><div class="abs" style="left:82.94999999999999px;top:140.7px;width:12.850000000000001px;height:12.3px;background:#d7d7d7"></div><div class="abs" style="left:95.5px;top:140.7px;width:12.850000000000001px;height:12.3px;background:#c9c9cb"></div><div class="abs" style="left:108.05000000000001px;top:140.7px;width:12.850000000000001px;height:12.3px;background:#eceef2"></div><div class="abs" style="left:473px;top:214.5px;width:128px;height:26px;background:#fafbfc;border-radius:14px 0 8px 14px;filter:blur(1.2px)"></div><div class="abs" style="left:473px;top:212px;width:22px;height:20px;background:#fbfbfd;border-radius:10px 0 0 10px;filter:blur(1px)"></div><div class="abs" style="left:484px;top:214.5px;width:13.3px;height:14px;background:#edeef2"></div><div class="abs" style="left:497.0px;top:220px;width:12.8px;height:8px;background:#dddddd"></div><div class="abs" style="left:509.5px;top:220px;width:12.8px;height:8px;background:#d4d4d5"></div><div class="abs" style="left:522.0px;top:220px;width:12.8px;height:8px;background:#dadadb"></div><div class="abs" style="left:534.5px;top:220px;width:12.8px;height:8px;background:#dedede"></div><div class="abs" style="left:547.0px;top:220px;width:12.8px;height:8px;background:#e3e3e5"></div>
</div>
</body></html>
